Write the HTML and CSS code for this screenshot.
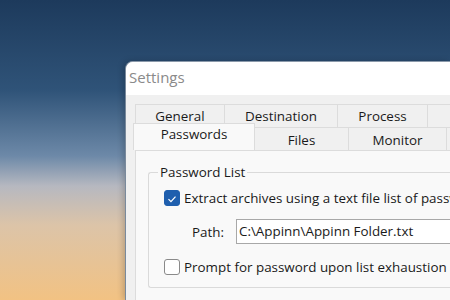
FILE: index.html
```html
<!DOCTYPE html>
<html lang="en">
<head>
    <meta charset="UTF-8">
    <title>Settings</title>
    <link rel="stylesheet" href="styles.css">
</head>
<body>
    <div class="desktop">
        <div class="window">
            <div class="titlebar">Settings</div>
            <div class="client">
                <div class="tab-row row-back">
                    <div class="tab w-general">General</div>
                    <div class="tab w-destination">Destination</div>
                    <div class="tab w-process">Process</div>
                    <div class="tab w-rest"></div>
                </div>
                <div class="tab-row row-front">
                    <div class="tab active w-passwords">Passwords</div>
                    <div class="tab w-files">Files</div>
                    <div class="tab w-monitor">Monitor</div>
                    <div class="tab w-rest"></div>
                </div>
                <div class="panel">
                    <fieldset class="group">
                        <legend>Password List</legend>
                        <label class="check-row first">
                            <span class="box checked">
                                <svg viewBox="0 0 16 16" width="16" height="16"><path d="M4 8.2 L6.8 11 L12 5.2" fill="none" stroke="#fff" stroke-width="1.4"/></svg>
                            </span>
                            Extract archives using a text file list of passwords
                        </label>
                        <div class="path-row">
                            <span class="path-label">Path:</span>
                            <div class="path-input">C:\Appinn\Appinn Folder.txt</div>
                        </div>
                        <label class="check-row">
                            <span class="box"></span>
                            Prompt for password upon list exhaustion
                        </label>
                    </fieldset>
                    <div class="next-group">Options</div>
                </div>
            </div>
        </div>
    </div>
</body>
</html>
```

FILE: styles.css
```css
body {
    margin: 0;
    width: 450px;
    height: 300px;
    overflow: hidden;
    font-family: 'Open Sans', 'Noto Sans', sans-serif;
    background: linear-gradient(180deg, #1d3a5c 0%, #2f5378 30%, #6d89a8 52%, #b6b8c0 62%, #dcc4a8 75%, #f2c283 100%);
}

.desktop {
    display: flex;
    padding: 61px 0 0 125px;
    height: 239px;
}

.window {
    flex: 1;
    background: #f0f0f0;
    border-radius: 8px 0 0 0;
    border-left: 1px solid #7a8a9c;
    border-top: 1px solid #8a99aa;
    overflow: hidden;
    box-shadow: -2px 0 6px rgba(0, 0, 0, 0.2);
}

.titlebar {
    height: 33px;
    background: #ffffff;
    color: #8a8a8a;
    font-size: 15px;
    line-height: 30px;
    padding-left: 3px;
}

.client {
    padding: 9px 0 0 9px;
    font-size: 13.4px;
    color: #1a1a1a;
}

.tab-row {
    display: flex;
    height: 23px;
}

.tab {
    box-sizing: border-box;
    flex: none;
    height: 23px;
    background: #f0f0f0;
    border: 1px solid #dcdcdc;
    border-bottom: none;
    text-align: center;
    line-height: 22px;
}

.tab + .tab {
    border-left: none;
}

.w-general { width: 90px; }
.w-destination { width: 113px; }
.w-process { width: 90px; }
.w-rest { width: 60px; }
.w-passwords { width: 118px; }
.w-files { width: 94px; }
.w-monitor { width: 98px; }

.row-front .tab {
    line-height: 24px;
}

.tab.active {
    background: #f9f9f9;
    width: 122px;
    height: 27px;
    margin: -4px 0 0 -2px;
    border-left: 1px solid #dcdcdc;
    border-right: 1px solid #dcdcdc;
    line-height: 20px;
    position: relative;
    z-index: 1;
}

.panel {
    background: #f9f9f9;
    border: 1px solid #dcdcdc;
    border-right: none;
    height: 200px;
    padding: 12px 0 0 12px;
}

.group {
    margin: 0;
    padding: 0 0 8px 15px;
    border: 1px solid #dadada;
    border-right: none;
    border-radius: 3px 0 0 3px;
}

.group legend {
    padding: 0 2px;
    margin-left: -6px;
    color: #1a1a1a;
}

.check-row {
    display: flex;
    align-items: center;
    gap: 4px;
    height: 24px;
    white-space: nowrap;
}

.check-row.first {
    margin-top: 5px;
}

.box {
    box-sizing: border-box;
    width: 16px;
    height: 16px;
    border: 1px solid #8a8a8a;
    border-radius: 3px;
    background: #ffffff;
    flex: none;
    display: flex;
}

.box.checked {
    background: #1f5fae;
    border-color: #1f5fae;
}

.path-row {
    display: flex;
    align-items: center;
    margin: 9px 0 11px 28px;
    height: 25px;
}

.path-label {
    width: 44px;
}

.path-input {
    flex: 1;
    box-sizing: border-box;
    height: 25px;
    background: #ffffff;
    border: 1px solid #a8a8a8;
    border-right: none;
    padding-left: 2px;
    line-height: 22px;
    white-space: nowrap;
}

.next-group {
    margin: 7px 0 0 10px;
    color: #1a1a1a;
}
```
